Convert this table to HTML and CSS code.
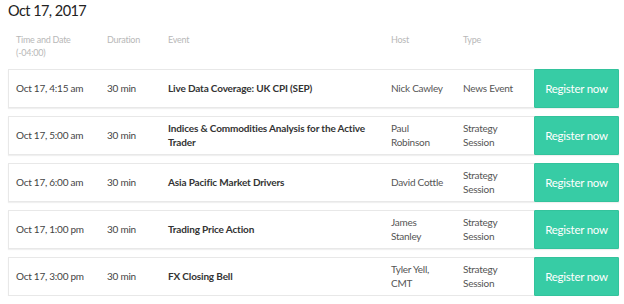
FILE: index.html
```html
<!DOCTYPE html>
<html>
<head>
<meta charset="utf-8">
<link rel="stylesheet" href="styles.css">
</head>
<body>
<div class="page">
  <h2 class="day">Oct 17, 2017</h2>
  <div class="head">
    <div class="c-time">Time and Date<br>(-04:00)</div>
    <div class="c-dur">Duration</div>
    <div class="c-event">Event</div>
    <div class="c-host">Host</div>
    <div class="c-type">Type</div>
  </div>
  <div class="list">
    <div class="row">
      <div class="c-time">Oct 17, 4:15 am</div>
      <div class="c-dur">30 min</div>
      <div class="c-event ev">Live Data Coverage: UK CPI (SEP)</div>
      <div class="c-host">Nick Cawley</div>
      <div class="c-type">News Event</div>
      <a class="btn">Register now</a>
    </div>
    <div class="row">
      <div class="c-time">Oct 17, 5:00 am</div>
      <div class="c-dur">30 min</div>
      <div class="c-event ev">Indices &amp; Commodities Analysis for the Active Trader</div>
      <div class="c-host">Paul Robinson</div>
      <div class="c-type">Strategy Session</div>
      <a class="btn">Register now</a>
    </div>
    <div class="row">
      <div class="c-time">Oct 17, 6:00 am</div>
      <div class="c-dur">30 min</div>
      <div class="c-event ev">Asia Pacific Market Drivers</div>
      <div class="c-host">David Cottle</div>
      <div class="c-type">Strategy Session</div>
      <a class="btn">Register now</a>
    </div>
    <div class="row">
      <div class="c-time">Oct 17, 1:00 pm</div>
      <div class="c-dur">30 min</div>
      <div class="c-event ev">Trading Price Action</div>
      <div class="c-host">James Stanley</div>
      <div class="c-type">Strategy Session</div>
      <a class="btn">Register now</a>
    </div>
    <div class="row">
      <div class="c-time">Oct 17, 3:00 pm</div>
      <div class="c-dur">30 min</div>
      <div class="c-event ev">FX Closing Bell</div>
      <div class="c-host">Tyler Yell, CMT</div>
      <div class="c-type">Strategy Session</div>
      <a class="btn">Register now</a>
    </div>
  </div>
</div>
</body>
</html>
```
FILE: styles.css
```css
html, body {
  margin: 0;
  padding: 0;
  background: #fff;
}
body {
  font-family: Lato, "Open Sans", sans-serif;
  color: #444;
}
.page {
  width: 611px;
  padding: 0 0 0 8px;
}
.day {
  margin: 0;
  padding-top: 2px;
  font-size: 14.5px;
  line-height: 18px;
  letter-spacing: -0.55px;
  font-weight: 400;
  color: #222;
}
.head {
  display: flex;
  padding: 13px 0 0 8px;
  height: 36px;
  font-size: 9px;
  line-height: 13px;
  letter-spacing: -0.25px;
  color: #b8b8b8;
}
.c-time { width: 91px; flex: none; }
.c-dur { width: 61px; flex: none; }
.c-event { width: 223px; flex: none; padding-right: 20px; box-sizing: border-box; }
.c-host { width: 72px; flex: none; padding-right: 14px; box-sizing: border-box; }
.c-type { width: 70px; flex: none; padding-right: 10px; box-sizing: border-box; }
.list {
  display: flex;
  flex-direction: column;
  gap: 8px;
}
.row {
  display: flex;
  align-items: center;
  height: 37px;
  padding-left: 7px;
  border: 1px solid #e8e8e8;
  box-shadow: 0 1px 1px rgba(0,0,0,0.06);
  font-size: 10px;
  line-height: 13.5px;
  letter-spacing: -0.25px;
  color: #444;
}
.row .c-host, .row .c-type { color: #555; }
.ev {
  font-weight: 700;
  letter-spacing: -0.15px;
  color: #333;
}
.btn {
  margin: -1px -1px -1px auto;
  width: 85px;
  height: 39px;
  box-sizing: border-box;
  display: flex;
  align-items: center;
  justify-content: center;
  background: #37cca5;
  border: 1px solid #33c39c;
  border-radius: 1px;
  color: #fff;
  font-size: 11.5px;
  letter-spacing: -0.25px;
}
```
